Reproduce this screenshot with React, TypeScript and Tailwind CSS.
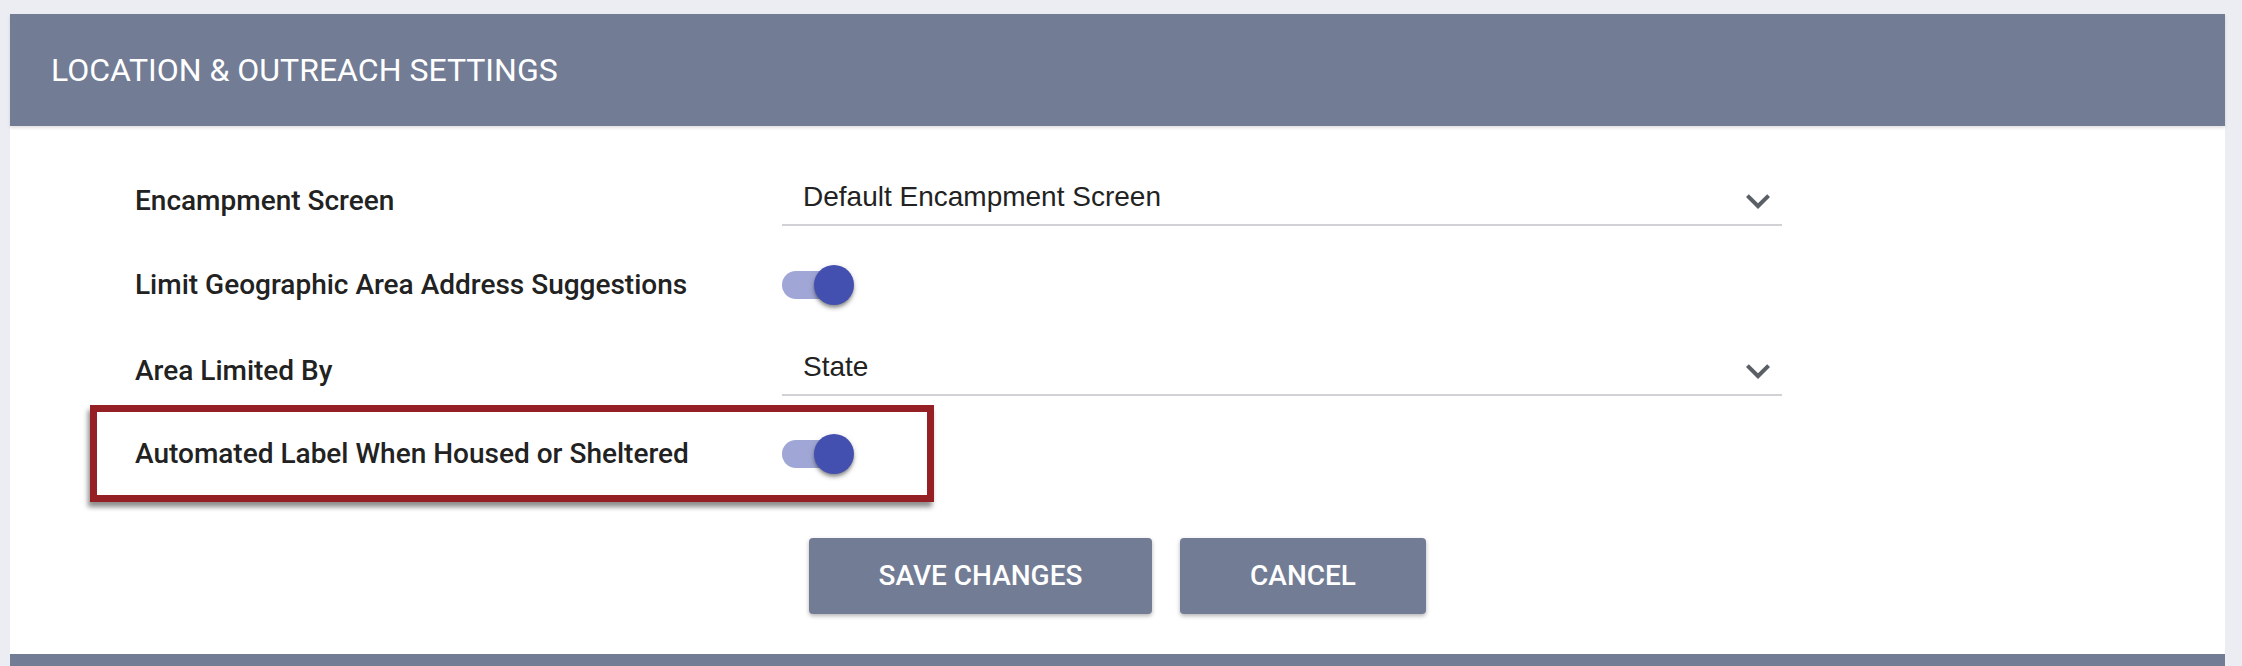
import { useState } from "react";

const roboto = { fontFamily: "Roboto, 'Liberation Sans', sans-serif" };

function Chevron() {
  return (
    <svg viewBox="0 0 24 24" className="w-[48px] h-[48px] mt-[8px] fill-[#5b5f66]">
      <path d="M16.59 8.59L12 13.17 7.41 8.59 6 10l6 6 6-6z" />
    </svg>
  );
}

function SelectBox({ value }: { value: string }) {
  return (
    <div className="-mt-[6px] flex h-[56px] w-[1000px] items-center justify-between border-b-2 border-[#d2d2d6] pl-[21px]">
      <span className="text-[28px] text-[#222222] font-['Liberation_Sans',Arial,sans-serif]">
        {value}
      </span>
      <Chevron />
    </div>
  );
}

function Toggle({ on }: { on: boolean }) {
  return (
    <div className="relative h-[40px] w-[72px]">
      <div
        className={`absolute left-0 top-[6px] h-[28px] w-[68px] rounded-full ${
          on ? "bg-[#a0a7d6]" : "bg-[#bdbdbd]"
        }`}
      />
      <div
        className={`absolute top-0 h-[40px] w-[40px] rounded-full shadow-[0_4px_4px_-1px_rgba(0,0,0,0.25),0_2px_3px_0_rgba(0,0,0,0.18),0_2px_7px_0_rgba(0,0,0,0.14)] ${
          on ? "left-[32px] bg-[#4350af]" : "left-0 bg-[#fafafa]"
        }`}
      />
    </div>
  );
}

function Label({ children }: { children: string }) {
  return (
    <div className="w-[647px] text-[28px] font-medium text-[#222222]">{children}</div>
  );
}

export default function App() {
  const [limit] = useState(true);
  const [automated] = useState(true);
  return (
    <div className="min-h-[666px] bg-[#ecedf2] pt-[14px] pl-[10px] pr-[17px]" style={roboto}>
      <div className="bg-white">
        <div className="flex h-[112px] items-center bg-[#727c94] px-[41px] shadow-[0_2px_3px_rgba(0,0,0,0.12)]">
          <h1 className="text-[32px] text-white">LOCATION &amp; OUTREACH SETTINGS</h1>
        </div>

        <div className="pl-[125px] pt-[34px]">
          <div className="flex h-[82px] items-center">
            <Label>Encampment Screen</Label>
            <SelectBox value="Default Encampment Screen" />
          </div>
          <div className="flex h-[85px] items-center">
            <Label>Limit Geographic Area Address Suggestions</Label>
            <Toggle on={limit} />
          </div>
          <div className="flex h-[88px] items-center">
            <Label>Area Limited By</Label>
            <SelectBox value="State" />
          </div>
          <div className="-ml-[45px] -mt-[10px] flex h-[97px] w-[844px] items-center border-[7px] border-[#942026] pl-[38px] shadow-[-2px_5px_5px_rgba(0,0,0,0.45)]">
            <Label>Automated Label When Housed or Sheltered</Label>
            <Toggle on={automated} />
          </div>
        </div>

        <div className="flex justify-center gap-[28px] pt-[36px] pb-[40px]">
          <button className="h-[76px] w-[343px] rounded-[4px] bg-[#727c94] text-[28px] font-medium text-white shadow-[0_2px_4px_rgba(0,0,0,0.3)]">
            SAVE CHANGES
          </button>
          <button className="h-[76px] w-[246px] rounded-[4px] bg-[#727c94] text-[28px] font-medium text-white shadow-[0_2px_4px_rgba(0,0,0,0.3)]">
            CANCEL
          </button>
        </div>

        <div className="h-[40px] bg-[#727c94]" />
      </div>
    </div>
  );
}
